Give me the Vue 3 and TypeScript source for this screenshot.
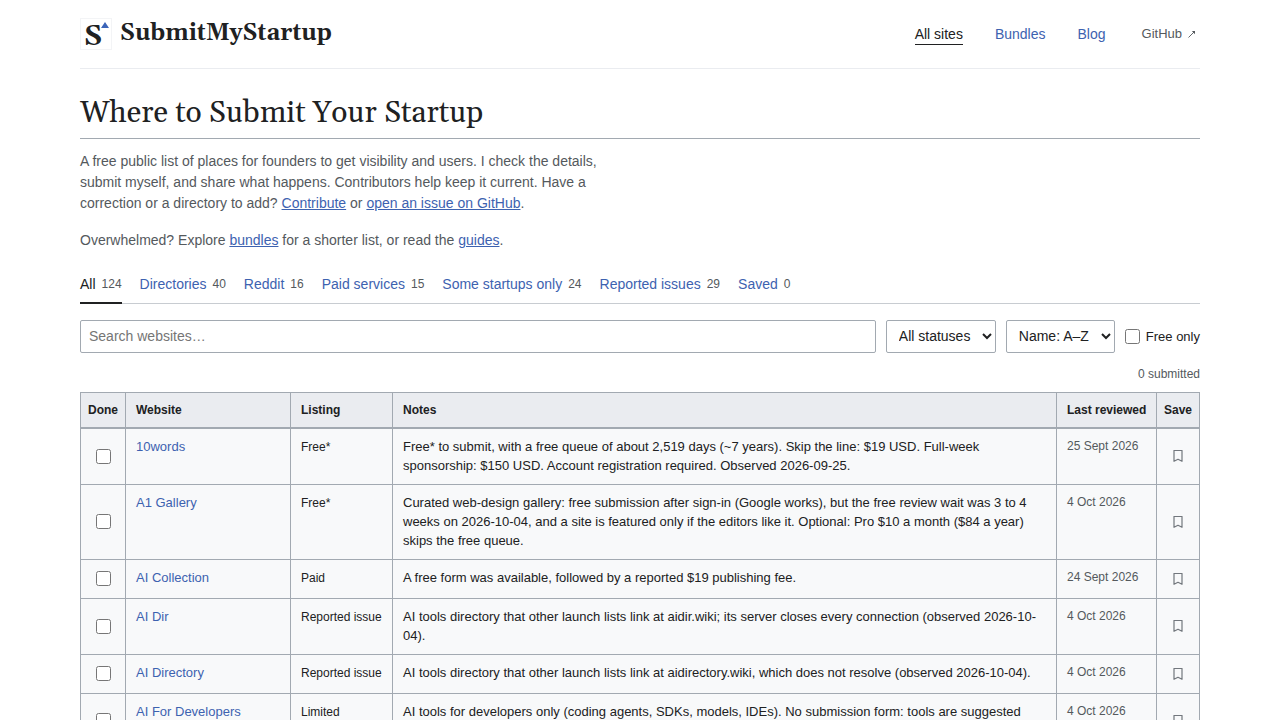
<script setup lang="ts">
import { computed, ref } from 'vue'

interface Site {
  name: string
  listing: string
  notes: string
  reviewed: string
}

interface Tab {
  label: string
  count: number
}

const tabs: Tab[] = [
  { label: 'All', count: 124 },
  { label: 'Directories', count: 40 },
  { label: 'Reddit', count: 16 },
  { label: 'Paid services', count: 15 },
  { label: 'Some startups only', count: 24 },
  { label: 'Reported issues', count: 29 },
  { label: 'Saved', count: 0 },
]

const sites: Site[] = [
  {
    name: '10words',
    listing: 'Free*',
    notes:
      'Free* to submit, with a free queue of about 2,519 days (~7 years). Skip the line: $19 USD. Full-week sponsorship: $150 USD. Account registration required. Observed 2026-09-25.',
    reviewed: '25 Sept 2026',
  },
  {
    name: 'A1 Gallery',
    listing: 'Free*',
    notes:
      'Curated web-design gallery: free submission after sign-in (Google works), but the free review wait was 3 to 4 weeks on 2026-10-04, and a site is featured only if the editors like it. Optional: Pro $10 a month ($84 a year) skips the free queue.',
    reviewed: '4 Oct 2026',
  },
  {
    name: 'AI Collection',
    listing: 'Paid',
    notes: 'A free form was available, followed by a reported $19 publishing fee.',
    reviewed: '24 Sept 2026',
  },
  {
    name: 'AI Dir',
    listing: 'Reported issue',
    notes:
      'AI tools directory that other launch lists link at aidir.wiki; its server closes every connection (observed 2026-10-04).',
    reviewed: '4 Oct 2026',
  },
  {
    name: 'AI Directory',
    listing: 'Reported issue',
    notes:
      'AI tools directory that other launch lists link at aidirectory.wiki, which does not resolve (observed 2026-10-04).',
    reviewed: '4 Oct 2026',
  },
  {
    name: 'AI For Developers',
    listing: 'Limited',
    notes:
      'AI tools for developers only (coding agents, SDKs, models, IDEs). No submission form: tools are suggested through email.',
    reviewed: '4 Oct 2026',
  },
]

const activeTab = ref('All')
const query = ref('')
const freeOnly = ref(false)
const done = ref<string[]>([])
const saved = ref<string[]>([])

const visibleSites = computed(() =>
  sites.filter(
    (s) =>
      s.name.toLowerCase().includes(query.value.toLowerCase()) &&
      (!freeOnly.value || s.listing.startsWith('Free')),
  ),
)

function toggleSaved(name: string): void {
  saved.value = saved.value.includes(name)
    ? saved.value.filter((n) => n !== name)
    : [...saved.value, name]
}
</script>

<template>
  <div class="page">
    <header class="site-header">
      <a class="brand" href="#">
        <span class="mark" aria-hidden="true">
          S
          <svg class="mark-arrow" viewBox="0 0 8 6" width="8" height="6">
            <path d="M4 0 8 6H0Z" fill="#3b64b8" />
          </svg>
        </span>
        <span class="brand-name">SubmitMyStartup</span>
      </a>
      <nav class="nav" aria-label="Main">
        <a class="current" href="#">All sites</a>
        <a href="#">Bundles</a>
        <a href="#">Blog</a>
        <a class="external" href="#">
          GitHub
          <svg viewBox="0 0 8 8" width="8" height="8" aria-hidden="true">
            <path d="M.5 7.500 6.500 1.500" fill="none" stroke="currentColor" stroke-width=".9" />
            <path d="M3.800 1H7v3.200Z" fill="currentColor" />
          </svg>
        </a>
      </nav>
    </header>

    <main>
      <h1>Where to Submit Your Startup</h1>
      <div class="intro">
        <p>
          A free public list of places for founders to get visibility and users. I check the details,
          submit myself, and share what happens. Contributors help keep it current. Have a correction
          or a directory to add? <a href="#">Contribute</a> or
          <a href="#">open an issue on GitHub</a>.
        </p>
        <p>
          Overwhelmed? Explore <a href="#">bundles</a> for a shorter list, or read the
          <a href="#">guides</a>.
        </p>
      </div>

      <div class="tabs">
        <button
          v-for="tab in tabs"
          :key="tab.label"
          type="button"
          :class="{ active: tab.label === activeTab }"
          @click="activeTab = tab.label"
        >
          {{ tab.label }}<span class="count">{{ tab.count }}</span>
        </button>
      </div>

      <div class="filters">
        <input v-model="query" class="search" type="search" placeholder="Search websites…" aria-label="Search websites" />
        <select aria-label="Status">
          <option>All statuses</option>
        </select>
        <select aria-label="Sort">
          <option>Name: A–Z</option>
        </select>
        <label class="free"><input v-model="freeOnly" type="checkbox" />Free only</label>
      </div>
      <p class="progress">{{ done.length }} submitted</p>

      <table>
        <colgroup>
          <col class="col-done" />
          <col class="col-site" />
          <col class="col-listing" />
          <col />
          <col class="col-date" />
          <col class="col-save" />
        </colgroup>
        <thead>
          <tr>
            <th class="center">Done</th>
            <th>Website</th>
            <th>Listing</th>
            <th>Notes</th>
            <th>Last reviewed</th>
            <th class="center">Save</th>
          </tr>
        </thead>
        <tbody>
          <tr v-for="site in visibleSites" :key="site.name">
            <td class="center">
              <input v-model="done" type="checkbox" :value="site.name" :aria-label="`${site.name} submitted`" />
            </td>
            <td><a href="#">{{ site.name }}</a></td>
            <td class="listing">{{ site.listing }}</td>
            <td>{{ site.notes }}</td>
            <td class="date">{{ site.reviewed }}</td>
            <td class="center">
              <button
                class="save"
                type="button"
                :aria-label="`Save ${site.name}`"
                :aria-pressed="saved.includes(site.name)"
                @click="toggleSaved(site.name)"
              >
                <svg viewBox="0 0 10 12" width="10" height="12" aria-hidden="true">
                  <path
                    d="M1 .5H9V11.300L5 9.300 1 11.300Z"
                    :fill="saved.includes(site.name) ? 'currentColor' : 'none'"
                    stroke="currentColor"
                    stroke-width="1.200"
                    stroke-linejoin="round"
                  />
                </svg>
              </button>
            </td>
          </tr>
        </tbody>
      </table>
    </main>
  </div>
</template>

<style>
body {
  margin: 0;
  background: #fff;
}
</style>

<style scoped>
.page {
  box-sizing: border-box;
  max-width: 1200px;
  margin: 0 auto;
  padding: 0 40px;
  height: 100vh;
  overflow: hidden;
  color: #202122;
  font: 14px/1.5 'Liberation Sans', Arial, sans-serif;
}

a {
  color: #3d62b0;
  text-decoration: none;
}

.site-header {
  display: flex;
  align-items: center;
  justify-content: space-between;
  height: 68px;
  border-bottom: 1px solid #eaecf0;
}

.brand {
  display: flex;
  align-items: center;
  gap: 8px;
  color: #202122;
  font-family: Georgia, Gelasio, 'Liberation Serif', serif;
  font-weight: 700;
}

.mark {
  position: relative;
  box-sizing: border-box;
  width: 32px;
  height: 32px;
  padding-left: 3px;
  border: 1px solid #f3f4f6;
  font-size: 28px;
  line-height: 36px;
}

.mark-arrow {
  position: absolute;
  top: 3px;
  right: 2px;
}

.brand-name {
  font-size: 23px;
  line-height: 36px;
}

.nav {
  display: flex;
  align-items: center;
  gap: 32px;
  padding-right: 4px;
}

.nav a {
  line-height: 20px;
  border-bottom: 1px solid transparent;
}

.nav a.current {
  color: #202122;
  border-bottom-color: #202122;
}

.nav a.external {
  display: flex;
  align-items: center;
  gap: 6px;
  margin-left: 4px;
  color: #54595d;
  font-size: 13px;
}

h1 {
  margin: 25px 0 12px;
  padding-bottom: 5px;
  border-bottom: 1px solid #a2a9b1;
  font: 400 30px/39px Georgia, Gelasio, 'Liberation Serif', serif;
}

.intro {
  max-width: 520px;
  color: #54595d;
}

.intro p {
  margin: 0 0 16px;
}

.intro a {
  text-decoration: underline;
}

.tabs {
  display: flex;
  gap: 18px;
  margin-top: 17px;
  border-bottom: 1px solid #c8ccd1;
}

.tabs button {
  display: flex;
  align-items: center;
  gap: 6px;
  margin-bottom: -1px;
  padding: 6px 0 7px;
  border: 0;
  border-bottom: 2px solid transparent;
  background: none;
  color: #3d62b0;
  font: inherit;
  line-height: 21px;
}

.tabs button.active {
  color: #202122;
  border-bottom-color: #202122;
}

.count {
  color: #54595d;
  font-size: 12px;
}

.filters {
  display: flex;
  align-items: center;
  gap: 10px;
  margin-top: 16px;
}

.search,
select {
  box-sizing: border-box;
  height: 33px;
  border: 1px solid #a2a9b1;
  border-radius: 2px;
  background: #fff;
  color: #202122;
  font: inherit;
}

.search {
  flex: 1;
  min-width: 0;
  padding: 0 8px 2px;
}

select {
  padding: 0 8px 1px;
}

input[type='checkbox'] {
  width: 15px;
  height: 15px;
  margin: 0;
}

.free {
  display: flex;
  align-items: center;
  gap: 6px;
  font-size: 13px;
}

.progress {
  margin: 12px 0 9px;
  color: #54595d;
  font-size: 12px;
  text-align: right;
}

table {
  width: 100%;
  border-collapse: collapse;
  table-layout: fixed;
  background: #f8f9fa;
  font-size: 13px;
}

.col-done {
  width: 45px;
}
.col-site {
  width: 165px;
}
.col-listing {
  width: 102px;
}
.col-date {
  width: 100px;
}
.col-save {
  width: 43px;
}

th,
td {
  padding: 8px 10px;
  border: 1px solid #a2a9b1;
  text-align: left;
  vertical-align: top;
}

td {
  line-height: 1.49;
}

th {
  border-bottom-width: 2px;
  background: #eaecf0;
  font-size: 12px;
  white-space: nowrap;
}

.center {
  padding-right: 0;
  padding-left: 0;
  text-align: center;
  vertical-align: middle;
}

td.center input {
  display: block;
  margin: 0 auto;
}

.listing {
  font-size: 12px;
  line-height: 20px;
  white-space: nowrap;
}

.date {
  color: #54595d;
  font-size: 12px;
  line-height: 19px;
}

.save {
  display: flex;
  align-items: center;
  justify-content: center;
  width: 22px;
  height: 22px;
  margin: 0 auto;
  padding: 0;
  border: 0;
  background: none;
  color: #72777d;
}
</style>
